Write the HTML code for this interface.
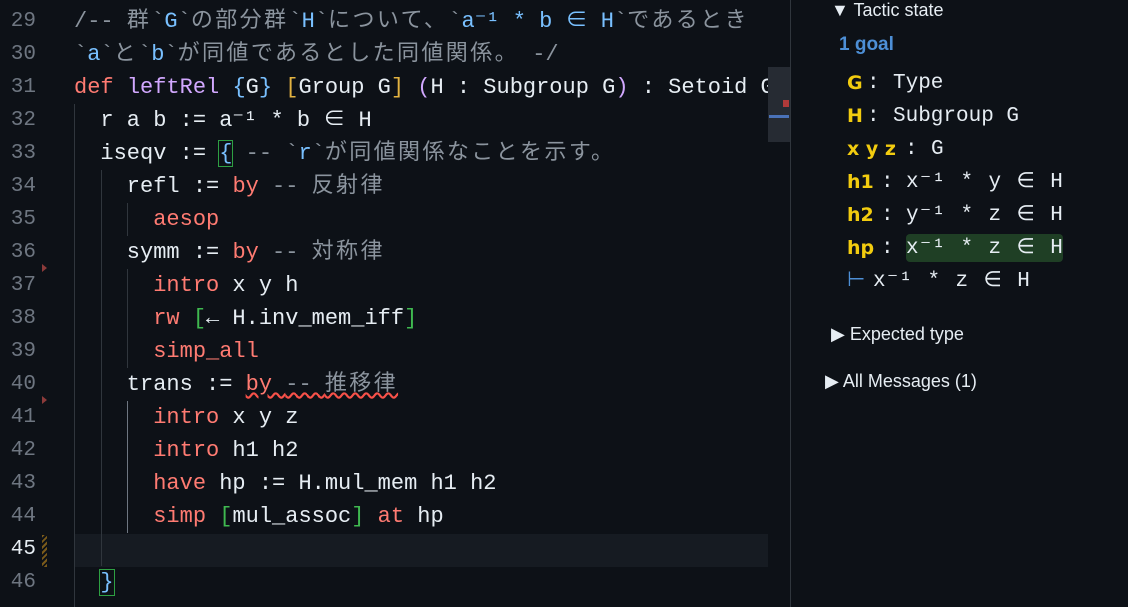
<!DOCTYPE html>
<html><head><meta charset="utf-8"><style>
body{margin:0;width:1128px;height:607px;background:#0d1117;overflow:hidden;position:relative;font-family:"Liberation Mono","Noto Sans CJK JP",monospace;}
.ed{position:absolute;left:0;top:0;width:768px;height:607px;overflow:hidden;}
.ln{position:absolute;left:0;width:36px;text-align:right;font-size:21px;color:#6e7681;line-height:33px;}
.code{position:absolute;left:74px;font-size:22px;line-height:33px;color:#e6edf3;white-space:pre;}
.c{color:#8b949e}.k{color:#ff7b72}.f{color:#d2a8ff}.b{color:#79c0ff}.y{color:#e3b341}.g{color:#3fb950}
.j{letter-spacing:2.4px}
.guide{position:absolute;width:1px;background:#30363d;}
.panel{position:absolute;left:790px;top:0;width:338px;height:607px;border-left:1px solid #30363d;}
.s{font-family:"Liberation Sans",sans-serif;color:#e6edf3;font-size:18px;position:absolute;}
.n{position:absolute;font-family:"DejaVu Sans",sans-serif;font-weight:bold;color:#f2cc0f;font-size:19px;line-height:33px;white-space:pre;}
.v{position:absolute;font-family:"Liberation Mono",monospace;color:#e6edf3;font-size:21px;line-height:33px;white-space:pre;}
.m{letter-spacing:1.4px}
</style></head><body>
<div class="ed">
<div style="position:absolute;left:74px;top:534px;width:700px;height:33px;background:#161b22"></div>
<div class="guide" style="left:74px;top:104px;height:503px"></div>
<div class="guide" style="left:101px;top:170px;height:396px"></div>
<div class="guide" style="left:127px;top:203px;height:33px"></div>
<div class="guide" style="left:127px;top:269px;height:99px"></div>
<div class="guide" style="left:127px;top:401px;height:132px;background:#6e7681"></div>
<div style="position:absolute;left:42px;top:264px;border-left:5px solid #8b3a3a;border-top:4px solid transparent;border-bottom:4px solid transparent"></div>
<div style="position:absolute;left:42px;top:396px;border-left:5px solid #8b3a3a;border-top:4px solid transparent;border-bottom:4px solid transparent"></div>
<div style="position:absolute;left:42px;top:535px;width:5px;height:32px;background:repeating-linear-gradient(135deg,#7a5a1a 0 2px,transparent 2px 4px)"></div>
<div style="position:absolute;left:0;top:5px">
<div class="ln" style="top:0">29</div><div class="ln" style="top:33px">30</div><div class="ln" style="top:66px">31</div><div class="ln" style="top:99px">32</div><div class="ln" style="top:132px">33</div><div class="ln" style="top:165px">34</div><div class="ln" style="top:198px">35</div><div class="ln" style="top:231px">36</div><div class="ln" style="top:264px">37</div><div class="ln" style="top:297px">38</div><div class="ln" style="top:330px">39</div><div class="ln" style="top:363px">40</div><div class="ln" style="top:396px">41</div><div class="ln" style="top:429px">42</div><div class="ln" style="top:462px">43</div><div class="ln" style="top:495px">44</div><div class="ln" style="top:528px;color:#e6edf3">45</div><div class="ln" style="top:561px">46</div>
</div>
<div class="code" style="top:5px"><span class="c">/-- <span class="j">群</span>`<span class="b">G</span>`<span class="j">の部分群</span>`<span class="b">H</span>`<span class="j">について、</span>`<span class="b">a⁻¹ * b ∈ H</span>`<span class="j">であるとき</span></span>
<span class="c">`<span class="b">a</span>`<span class="j">と</span>`<span class="b">b</span>`<span class="j">が同値であるとした同値関係。</span> -/</span>
<span class="k">def</span> <span class="f">leftRel</span> <span class="b">{</span>G<span class="b">}</span> <span class="y">[</span>Group G<span class="y">]</span> <span class="f">(</span>H : Subgroup G<span class="f">)</span> : Setoid G <span class="k">w</span>
  r a b := a⁻¹ * b ∈ H
  iseqv := <span class="b" style="outline:1px solid #2ea043">{</span> <span class="c">-- `<span class="b">r</span>`<span class="j">が同値関係なことを示す。</span></span>
    refl := <span class="k">by</span> <span class="c">-- <span class="j">反射律</span></span>
      <span class="k">aesop</span>
    symm := <span class="k">by</span> <span class="c">-- <span class="j">対称律</span></span>
      <span class="k">intro</span> x y h
      <span class="k">rw</span> <span class="g">[</span>← H.inv_mem_iff<span class="g">]</span>
      <span class="k">simp_all</span>
    trans := <span class="k" style="text-decoration:underline wavy #f85149">by <span class="c">-- <span class="j">推移律</span></span></span>
      <span class="k">intro</span> x y z
      <span class="k">intro</span> h1 h2
      <span class="k">have</span> hp := H.mul_mem h1 h2
      <span class="k">simp</span> <span class="g">[</span>mul_assoc<span class="g">]</span> <span class="k">at</span> hp

  <span class="b" style="outline:1px solid #2ea043">}</span></div>
</div>
<div style="position:absolute;left:768px;top:67px;width:22px;height:75px;background:#262b33"></div>
<div style="position:absolute;left:769px;top:115px;width:20px;height:3px;background:#4a72b8"></div>
<div style="position:absolute;left:783px;top:100px;width:6px;height:7px;background:#b03a3a"></div>
<div class="panel">
<div class="s" style="left:40px;top:0px">▼ Tactic state</div>
<div class="s" style="left:48px;top:34px;color:#4d8fd6;font-weight:bold;font-size:19px">1 goal</div>

<div class="n" style="left:56px;top:67px">G</div><div class="v" style="left:76px;top:67px">:</div><div class="v" style="left:102px;top:67px">Type</div>
<div class="n" style="left:56px;top:100px">H</div><div class="v" style="left:76px;top:100px">:</div><div class="v" style="left:102px;top:100px">Subgroup G</div>
<div class="n" style="left:56px;top:133px">x y z</div><div class="v" style="left:114px;top:133px">:</div><div class="v" style="left:140px;top:133px">G</div>
<div class="n" style="left:56px;top:166px">h1</div><div class="v" style="left:90px;top:166px">:</div><div class="v m" style="left:115px;top:166px">x⁻¹ * y ∈ H</div>
<div class="n" style="left:56px;top:199px">h2</div><div class="v" style="left:90px;top:199px">:</div><div class="v m" style="left:115px;top:199px">y⁻¹ * z ∈ H</div>
<div style="position:absolute;left:115px;top:234px;width:157px;height:28px;background:#1f3f25;border-radius:4px"></div>
<div class="n" style="left:56px;top:232px">hp</div><div class="v" style="left:90px;top:232px">:</div><div class="v m" style="left:115px;top:232px">x⁻¹ * z ∈ H</div>
<div class="v" style="left:56px;top:265px;color:#4d8fd6">⊢</div><div class="v m" style="left:82px;top:265px">x⁻¹ * z ∈ H</div>

<div class="s" style="left:40px;top:324px">▶ Expected type</div>
<div class="s" style="left:34px;top:371px">▶ All Messages (1)</div>
</div>
</body></html>
